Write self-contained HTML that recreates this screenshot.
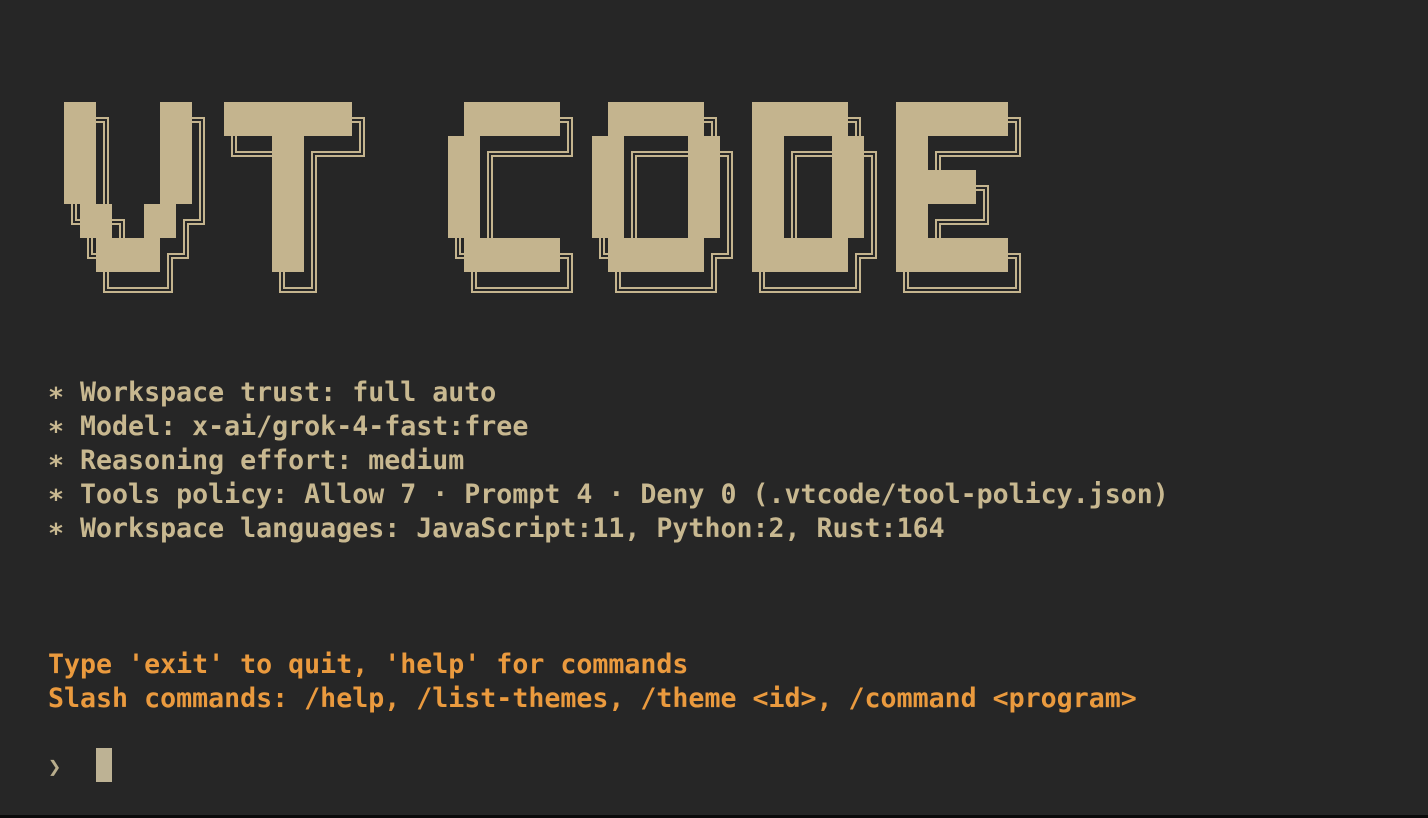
<!DOCTYPE html>
<html><head><meta charset="utf-8"><style>
html,body{margin:0;padding:0;background:#262626;width:1428px;height:818px;overflow:hidden;position:relative}
svg{position:absolute;left:0;top:0}
.t{position:absolute;left:48px;top:376px;font-family:"DejaVu Sans Mono","Liberation Mono",monospace;font-weight:bold;font-size:26.6px;line-height:34px;color:#c8b890;white-space:pre}
.o{color:#ea9a3e}
.p{position:absolute;left:48px;top:751px;font-family:"DejaVu Sans Mono",monospace;font-size:22px;line-height:34px;color:#b8ad8c}
.cur{position:absolute;left:96px;top:748px;width:16px;height:34px;background:#bdb294}
.bot{position:absolute;left:0;top:815px;width:1428px;height:3px;background:#0a0a0a}
</style></head><body>
<svg width="1428" height="818" viewBox="0 0 1428 818">
<defs>
<filter id="dbl" filterUnits="userSpaceOnUse" x="0" y="0" width="1428" height="818">
<feMorphology in="SourceAlpha" operator="dilate" radius="3" result="d3"/>
<feMorphology in="SourceAlpha" operator="erode" radius="3" result="e3"/>
<feMorphology in="SourceAlpha" operator="dilate" radius="1" result="d1"/>
<feMorphology in="SourceAlpha" operator="erode" radius="1" result="e1"/>
<feComposite in="d3" in2="e3" operator="out" result="r3"/>
<feComposite in="d1" in2="e1" operator="out" result="r1"/>
<feComposite in="r3" in2="r1" operator="out" result="ring"/>
<feFlood flood-color="#c4b48e" result="f"/>
<feComposite in="f" in2="ring" operator="in"/>
</filter>
<g id="L">
<rect x="64" y="102" width="32" height="102"/><rect x="160" y="102" width="32" height="102"/>
<rect x="80" y="204" width="32" height="34"/><rect x="144" y="204" width="32" height="34"/>
<rect x="96" y="238" width="64" height="34"/>
<rect x="224" y="102" width="128" height="34"/><rect x="272" y="136" width="32" height="136"/>
<rect x="464" y="102" width="96" height="34"/><rect x="448" y="136" width="32" height="102"/><rect x="464" y="238" width="96" height="34"/>
<rect x="608" y="102" width="96" height="34"/><rect x="592" y="136" width="32" height="102"/><rect x="688" y="136" width="32" height="102"/><rect x="608" y="238" width="96" height="34"/>
<rect x="752" y="102" width="96" height="34"/><rect x="752" y="136" width="32" height="102"/><rect x="832" y="136" width="32" height="102"/><rect x="752" y="238" width="96" height="34"/>
<rect x="896" y="102" width="112" height="34"/><rect x="896" y="136" width="32" height="102"/><rect x="928" y="170" width="48" height="34"/><rect x="896" y="238" width="112" height="34"/>
</g>
</defs>
<g filter="url(#dbl)"><use href="#L" transform="translate(10,18)" fill="#000"/></g>
<use href="#L" fill="#c4b48e"/>
</svg>
<div class="t">∗ Workspace trust: full auto
∗ Model: x-ai/grok-4-fast:free
∗ Reasoning effort: medium
∗ Tools policy: Allow 7 · Prompt 4 · Deny 0 (.vtcode/tool-policy.json)
∗ Workspace languages: JavaScript:11, Python:2, Rust:164



<span class="o">Type 'exit' to quit, 'help' for commands
Slash commands: /help, /list-themes, /theme &lt;id&gt;, /command &lt;program&gt;</span></div>
<div class="p">❯</div>
<div class="cur"></div>
<div class="bot"></div>
</body></html>
